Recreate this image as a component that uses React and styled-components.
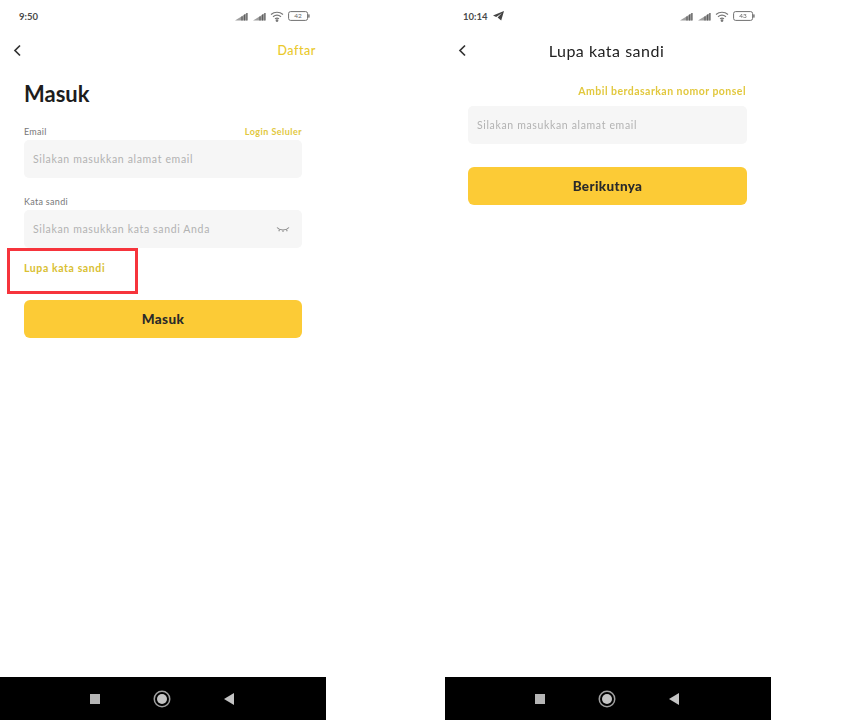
import React from "react";
import styled, { createGlobalStyle } from "styled-components";

const Global = createGlobalStyle`
  html, body { margin: 0; padding: 0; background: #fff; }
  body { font-family: "Lato", "Open Sans", sans-serif; overflow: hidden; }
`;

const Page = styled.div`
  display: flex;
  gap: 119px;
  width: 863px;
  height: 720px;
  filter: blur(0.6px);
`;

const Phone = styled.section`
  position: relative;
  display: flex;
  flex-direction: column;
  width: 326px;
  height: 720px;
  background: #fff;
`;

const StatusBar = styled.div`
  display: flex;
  align-items: center;
  justify-content: space-between;
  height: 32px;
  padding: 0 16px 0 ${(p) => p.$left}px;
  box-sizing: border-box;
`;

const Time = styled.div`
  display: flex;
  align-items: center;
  gap: 5px;
  font-size: 9.5px;
  font-weight: 700;
  color: #4a4a4a;
`;

const StatusIcons = styled.div`
  display: flex;
  align-items: center;
  gap: 4px;
`;

const Header = styled.header`
  position: relative;
  display: flex;
  align-items: center;
  justify-content: space-between;
  height: 36px;
  padding: 0 10px 0 13px;
`;

const HeaderTitle = styled.h2`
  position: absolute;
  left: 0;
  right: 3px;
  top: 9px;
  margin: 0;
  text-align: center;
  font-size: 16px;
  line-height: 20px;
  font-weight: 400;
  letter-spacing: 0.5px;
  color: #222;
`;

const HeaderLink = styled.a`
  font-size: 12.5px;
  font-weight: 500;
  color: #eac92c;
  letter-spacing: 0.55px;
`;

const Body = styled.main`
  flex: 1;
  display: flex;
  flex-direction: column;
  padding: ${(p) => p.$top}px 24px 0 ${(p) => p.$left}px;
`;

const Title = styled.h1`
  margin: 1px 0 18px;
  font-size: 22px;
  line-height: 26px;
  font-weight: 700;
  color: #1d1d1d;
`;

const LabelRow = styled.div`
  display: flex;
  align-items: center;
  justify-content: space-between;
  height: 12px;
  margin-bottom: 3px;
`;

const Label = styled.label`
  font-size: 9px;
  color: #777;
  letter-spacing: 0.3px;
`;

const SmallLink = styled.a`
  font-size: 9px;
  font-weight: 700;
  color: #e2c83e;
  letter-spacing: 0.45px;
`;

const RightLink = styled(SmallLink)`
  align-self: flex-end;
  font-size: 10.5px;
  line-height: 14px;
  margin: 0 1px 8px 0;
  letter-spacing: 0.47px;
`;

const Field = styled.div`
  display: flex;
  align-items: center;
  justify-content: space-between;
  height: 38px;
  padding: 0 12px 0 9px;
  margin-bottom: ${(p) => p.$after}px;
  background: #f6f6f6;
  border-radius: 5px;
  box-sizing: border-box;
`;

const Placeholder = styled.span`
  font-size: 10.5px;
  color: #b2b2b2;
  letter-spacing: 0.65px;
`;

const ForgotLink = styled(SmallLink)`
  font-size: 10.5px;
  line-height: 14px;
  margin: 13px 0 25px;
  color: #d9c032;
  letter-spacing: 0.6px;
`;

const PrimaryButton = styled.button`
  height: 38px;
  border: 0;
  padding: 0;
  border-radius: 6px;
  background: #fccb36;
  font-family: inherit;
  font-size: 13.5px;
  font-weight: 900;
  color: #2a2a2a;
  letter-spacing: 0.35px;
`;

const Highlight = styled.div`
  position: absolute;
  left: 7px;
  top: 248px;
  width: 131px;
  height: 46px;
  border: 3px solid #f6343c;
  box-sizing: border-box;
  pointer-events: none;
`;

const NavBar = styled.nav`
  display: flex;
  align-items: center;
  justify-content: center;
  gap: 57px;
  height: 43px;
  padding-right: 3px;
  background: #000;
`;

const NavSquare = styled.span`
  width: 10px;
  height: 10px;
  background: #b5b5b5;
`;

const NavCircle = styled.span`
  width: 10px;
  height: 10px;
  border-radius: 50%;
  background: #c4c4c4;
  box-shadow: 0 0 0 2px #000, 0 0 0 3.5px #a0a0a0;
`;

const NavBack = styled.span`
  width: 0;
  height: 0;
  border-top: 6px solid transparent;
  border-bottom: 6px solid transparent;
  border-right: 10px solid #c4c4c4;
`;

const Signal = () => (
  <svg width="14" height="9" viewBox="0 0 14 9">
    <path d="M1 8.5h12V1z" fill="#a0a0a0" />
    <path d="M8 8.5V4.5M10.5 8.5V2.5M13 8.5V1" stroke="#5f5f5f" strokeWidth="1.2" />
  </svg>
);

const Wifi = () => (
  <svg width="14" height="11" viewBox="0 0 14 11" fill="none" stroke="#777" strokeWidth="1.2">
    <path d="M1 3.5C4.5 0.5 9.5 0.5 13 3.5" />
    <path d="M3 5.7C5.3 3.9 8.7 3.9 11 5.7" />
    <path d="M5 7.8C6.2 7 7.8 7 9 7.8" />
    <circle cx="7" cy="9.6" r="0.8" fill="#777" />
  </svg>
);

const Battery = ({ level }) => (
  <svg width="22" height="10" viewBox="0 0 22 10">
    <rect x="0.6" y="0.6" width="19" height="8.8" rx="2" fill="#fff" stroke="#6f6f6f" />
    <rect x="20.2" y="3.4" width="1.4" height="3.2" fill="#6f6f6f" />
    <text x="10" y="7.4" textAnchor="middle" fontSize="6.5" fill="#666" fontFamily="Lato, sans-serif">{level}</text>
  </svg>
);

const Telegram = () => (
  <svg width="11" height="10" viewBox="0 0 11 10">
    <path d="M11 0 0 4.6l3.2 1.3L9 2 4.6 6.6l3.6 3z" fill="#444" />
  </svg>
);

const Chevron = () => (
  <svg width="9" height="13" viewBox="0 0 9 13" fill="none" stroke="#333" strokeWidth="1.7">
    <path d="M7 1.5 2 6.5l5 5" />
  </svg>
);

const ClosedEye = () => (
  <svg width="14" height="7" viewBox="0 0 14 7" fill="none" stroke="#8a8a8a" strokeWidth="1.1">
    <path d="M1 1.5C4 4.8 10 4.8 13 1.5" />
    <path d="M3.5 3.6 2.8 5.2M7 4.5V6M10.5 3.6l.7 1.6" />
  </svg>
);

const Status = ({ level, left, children }) => (
  <StatusBar $left={left}>
    <Time>{children}</Time>
    <StatusIcons>
      <Signal />
      <Signal />
      <Wifi />
      <Battery level={level} />
    </StatusIcons>
  </StatusBar>
);

const Nav = () => (
  <NavBar>
    <NavSquare />
    <NavCircle />
    <NavBack />
  </NavBar>
);

export default function App() {
  return (
    <>
      <Global />
      <Page>
        <Phone>
          <Status level="42" left={19}>9:50</Status>
          <Header>
            <Chevron />
            <HeaderLink>Daftar</HeaderLink>
          </Header>
          <Body $top={12} $left={24}>
            <Title>Masuk</Title>
            <LabelRow>
              <Label>Email</Label>
              <SmallLink>Login Seluler</SmallLink>
            </LabelRow>
            <Field $after={17}>
              <Placeholder>Silakan masukkan alamat email</Placeholder>
            </Field>
            <LabelRow>
              <Label>Kata sandi</Label>
            </LabelRow>
            <Field $after={0}>
              <Placeholder>Silakan masukkan kata sandi Anda</Placeholder>
              <ClosedEye />
            </Field>
            <ForgotLink>Lupa kata sandi</ForgotLink>
            <PrimaryButton>Masuk</PrimaryButton>
          </Body>
          <Highlight />
          <Nav />
        </Phone>
        <Phone>
          <Status level="43" left={18}>
            10:14 <Telegram />
          </Status>
          <Header>
            <Chevron />
            <HeaderTitle>Lupa kata sandi</HeaderTitle>
          </Header>
          <Body $top={16} $left={23}>
            <RightLink>Ambil berdasarkan nomor ponsel</RightLink>
            <Field $after={23}>
              <Placeholder>Silakan masukkan alamat email</Placeholder>
            </Field>
            <PrimaryButton>Berikutnya</PrimaryButton>
          </Body>
          <Nav />
        </Phone>
      </Page>
    </>
  );
}
